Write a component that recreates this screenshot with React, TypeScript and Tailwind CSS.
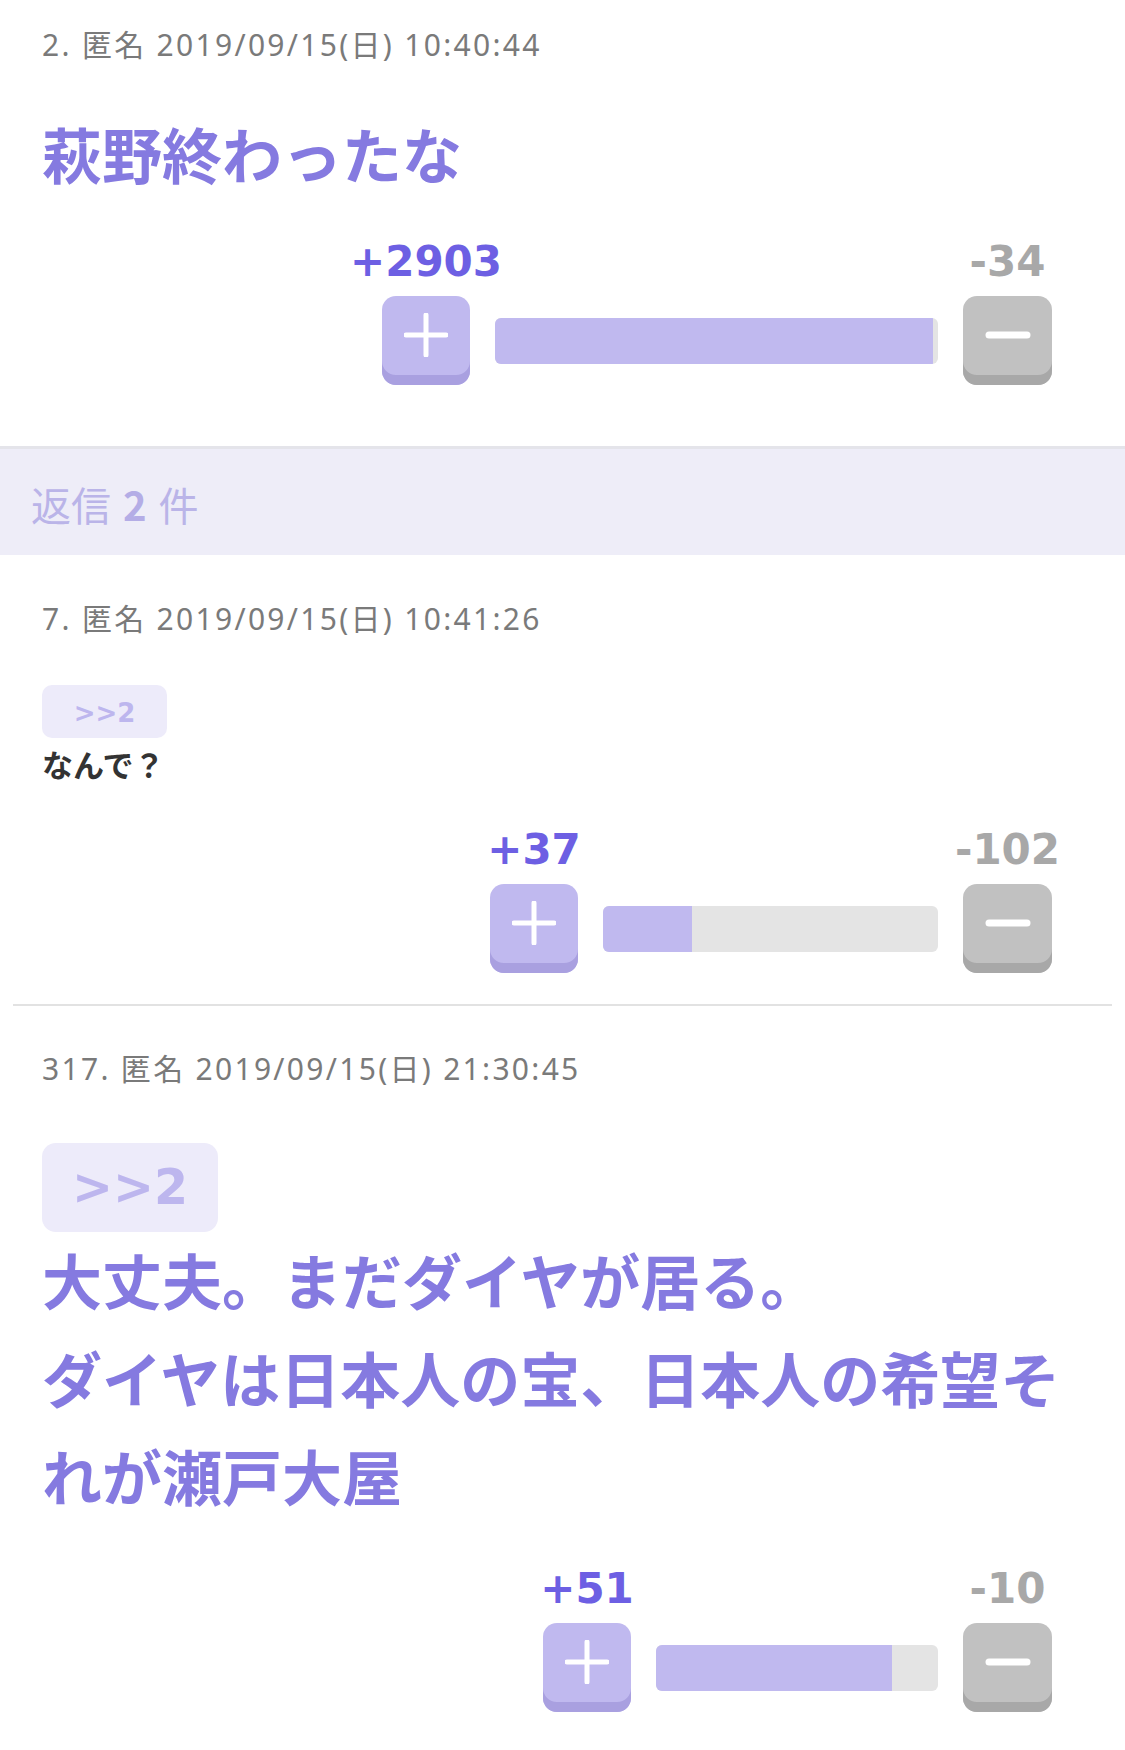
import React from 'react'

type Post = {
  no: number
  date: string
  quote?: 'small' | 'large'
  body: string[]
  big: boolean
  plus: number
  minus: number
  barClass: string
  wrapClass: string
  headMt: string
}

const posts: Post[] = [
  {
    no: 7,
    date: '2019/09/15(日) 10:41:26',
    quote: 'small',
    body: ['なんで？'],
    big: false,
    plus: 37,
    minus: 102,
    barClass: 'w-[335px]',
    wrapClass: 'pt-[47px] pb-[31px]',
    headMt: 'mt-[49px]',
  },
  {
    no: 317,
    date: '2019/09/15(日) 21:30:45',
    quote: 'large',
    body: ['大丈夫。まだダイヤが居る。', 'ダイヤは日本人の宝、日本人の希望それが瀬戸大屋'],
    big: true,
    plus: 51,
    minus: 10,
    barClass: 'w-[282px]',
    wrapClass: 'pt-[46px] pb-[36px]',
    headMt: 'mt-[57px]',
  },
]

const jp = "font-['Noto_Sans_CJK_JP',sans-serif]"
const meta = "font-['Noto_Sans','Noto_Sans_CJK_JP',sans-serif]"
const num = "font-['DejaVu_Sans','Noto_Sans_CJK_JP',sans-serif]"

const PlusIcon = () => (
  <svg width="44" height="44" viewBox="0 0 44 44">
    <path d="M22 2v40M2 22h40" stroke="#fff" strokeWidth="5" strokeLinecap="round" />
  </svg>
)

const MinusIcon = () => (
  <svg width="46" height="10" viewBox="0 0 46 10">
    <path d="M4 5h38" stroke="#fff" strokeWidth="7" strokeLinecap="round" />
  </svg>
)

// +/- buttons with the rating bar between them
const Vote = ({ plus, minus, barClass }: { plus: number; minus: number; barClass: string }) => {
  const ratio = (plus / (plus + minus)) * 100
  return (
    <div className="flex justify-end pr-[31px]">
      <div className={`grid grid-cols-[88px_auto_89px] items-center gap-x-[25px] gap-y-[13px] ${num}`}>
        <span className="justify-self-center whitespace-nowrap text-[42px] font-bold leading-[42px] text-[#6d5fe3]">
          +{plus}
        </span>
        <span />
        <span className="justify-self-center whitespace-nowrap text-[42px] font-bold leading-[42px] text-[#a8a8a8]">
          -{minus}
        </span>
        <button className="flex h-[89px] w-[88px] items-start justify-center rounded-[14px] bg-[#c0b9ef] pt-[17px] shadow-[inset_0_-10px_0_#a9a0e0]">
          <PlusIcon />
        </button>
        <div className={`h-[46px] overflow-hidden rounded-[6px] bg-[#e4e4e4] ${barClass}`}>
          <div className="h-full bg-[#c0b9ef]" style={{ width: `${ratio}%` }} />
        </div>
        <button className="flex h-[89px] w-[89px] items-start justify-center rounded-[14px] bg-[#c1c1c1] pt-[34px] shadow-[inset_0_-10px_0_#a8a8a8]">
          <MinusIcon />
        </button>
      </div>
    </div>
  )
}

const Head = ({ no, date }: { no: number; date: string }) => (
  <p className={`text-[30px] leading-[34px] tracking-[2.3px] text-[#7a7a7a] ${meta}`}>
    {no}. 匿名 {date}
  </p>
)

const Reply = ({ p }: { p: Post }) => (
  <div className={`px-[42px] ${p.wrapClass}`}>
    <Head no={p.no} date={p.date} />
    {p.quote === 'small' ? (
      <div className={`${p.headMt} flex h-[53px] w-[125px] items-center justify-center rounded-[10px] bg-[#edebfa] pt-[4px] ${num} text-[26px] font-bold text-[#bdb6ee]`}>
        &gt;&gt;2
      </div>
    ) : (
      <div className={`${p.headMt} flex h-[89px] w-[176px] items-center justify-center rounded-[14px] bg-[#edebfa] ${num} text-[49px] font-bold text-[#bdb6ee]`}>
        &gt;&gt;2
      </div>
    )}
    {p.big ? (
      <div className={`mt-[-2px] text-[60px] font-bold leading-[98px] text-[#857ae0] ${jp}`}>
        {p.body.map((line, i) => (
          <p key={i}>{line}</p>
        ))}
      </div>
    ) : (
      <p className={`mt-[4px] text-[31px] font-bold leading-[44px] text-[#333] ${jp}`}>{p.body[0]}</p>
    )}
    <div className={p.big ? 'mt-[44px]' : 'mt-[43px]'}>
      <Vote plus={p.plus} minus={p.minus} barClass={p.barClass} />
    </div>
  </div>
)

export default function App() {
  return (
    <div className="min-h-[1750px] w-full bg-white">
      {/* parent comment */}
      <div className="px-[42px] pt-[28px] pb-[61px]">
        <Head no={2} date="2019/09/15(日) 10:40:44" />
        <p className={`mt-[42px] text-[60px] font-bold leading-[98px] text-[#857ae0] ${jp}`}>萩野終わったな</p>
        <div className="mt-[39px]">
          <Vote plus={2903} minus={34} barClass="w-[443px]" />
        </div>
      </div>

      {/* reply count */}
      <div className={`flex h-[109px] items-center border-t-[3px] border-[#e4e4ea] bg-[#eeedf8] px-[31px] pt-[4px] text-[40px] text-[#bab4e8] ${jp}`}>
        返信 <b className="mx-[12px] font-bold text-[#b4ade6]">2</b> 件
      </div>

      <Reply p={posts[0]} />
      <div className="mx-[13px] h-[2px] bg-[#e2e2e2]" />
      <Reply p={posts[1]} />
    </div>
  )
}
